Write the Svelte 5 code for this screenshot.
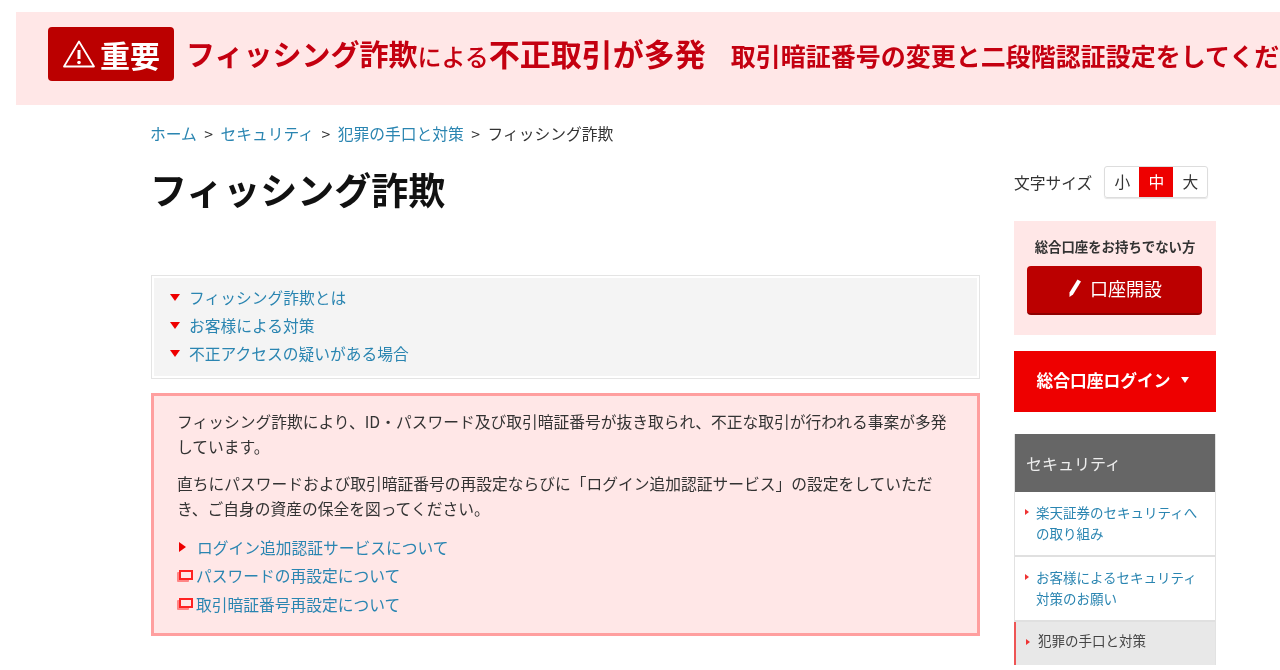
<script>
	const toc = ["フィッシング詐欺とは", "お客様による対策", "不正アクセスの疑いがある場合"];
	const crumbs = ["ホーム", "セキュリティ", "犯罪の手口と対策"];
	const sizes = ["小", "中", "大"];
	const nav = [
		{ text: "楽天証券のセキュリティへの取り組み" },
		{ text: "お客様によるセキュリティ対策のお願い" },
		{ text: "犯罪の手口と対策", active: true }
	];
	const windowLinks = ["パスワードの再設定について", "取引暗証番号再設定について"];
</script>

<div class="page">
	<div class="banner">
		<div class="badge">
			<svg width="34" height="30" viewBox="0 0 34 30" fill="none">
				<path d="M17 2.5 L32 27.5 H2 Z" stroke="#fff" stroke-width="1.8" stroke-linejoin="round" />
				<path d="M17 11 V20" stroke="#fff" stroke-width="3" />
				<circle cx="17" cy="23.5" r="1.8" fill="#fff" />
			</svg>
			<span>重要</span>
		</div>
		<p class="headline">
			<b>フィッシング詐欺</b><small>による</small><b class="wide">不正取引が多発</b>
		</p>
		<p class="subline">取引暗証番号の変更と二段階認証設定をしてください</p>
	</div>

	<div class="layout">
		<main>
			<nav class="crumbs">
				{#each crumbs as crumb}
					<a href="#top">{crumb}</a><span class="sep">&gt;</span>
				{/each}
				<span>フィッシング詐欺</span>
			</nav>
			<h1>フィッシング詐欺</h1>

			<ul class="toc">
				{#each toc as item}
					<li><i class="down"></i><a href="#top">{item}</a></li>
				{/each}
			</ul>

			<section class="alert">
				<p>フィッシング詐欺により、ID・パスワード及び取引暗証番号が抜き取られ、不正な取引が行われる事案が多発しています。</p>
				<p>直ちにパスワードおよび取引暗証番号の再設定ならびに「ログイン追加認証サービス」の設定をしていただき、ご自身の資産の保全を図ってください。</p>
				<ul class="links">
					<li><i class="right"></i><a href="#top">ログイン追加認証サービスについて</a></li>
					{#each windowLinks as link}
						<li>
							<svg class="win" width="16" height="12" viewBox="0 0 16 12">
								<rect x="0" y="2" width="12" height="10" rx="1" fill="#ff8585" />
								<rect x="3" y="1" width="12" height="8" fill="#ffe7e7" stroke="#f22" stroke-width="2" />
							</svg>
							<a href="#top">{link}</a>
						</li>
					{/each}
				</ul>
			</section>
		</main>

		<aside>
			<div class="sizes">
				<span>文字サイズ</span>
				<div class="switch">
					{#each sizes as size}
						<span class:on={size === "中"}>{size}</span>
					{/each}
				</div>
			</div>

			<div class="open">
				<p>総合口座をお持ちでない方</p>
				<div class="open-btn">
					<svg width="14" height="20" viewBox="0 0 14 20">
						<path d="M9.5 1.5 L13 3.5 L5 16.5 L1.5 19 L1.5 14.5 Z" fill="#fff" />
					</svg>
					<span>口座開設</span>
				</div>
			</div>

			<div class="login">総合口座ログイン<i></i></div>

			<div class="side">
				<h2>セキュリティ</h2>
				{#each nav as item}
					<div class="side-item" class:active={item.active}>
						<i></i><a href="#top">{item.text}</a>
					</div>
				{/each}
			</div>
		</aside>
	</div>
</div>

<style>
	:global(body) {
		margin: 0;
		overflow: hidden;
		background: #fff;
	}

	.page {
		width: 1280px;
		height: 670px;
		padding-top: 12px;
		box-sizing: border-box;
		overflow: hidden;
		font-family: "Noto Sans CJK JP", "Noto Sans", sans-serif;
		font-size: 15.75px;
		color: #333;
		/* the reference is a slightly soft, upscaled capture */
		filter: blur(0.45px);
	}

	p,
	h1,
	h2,
	ul {
		margin: 0;
		padding: 0;
		list-style: none;
	}

	a {
		color: #2a85b1;
		text-decoration: none;
	}

	i {
		display: block;
		flex: none;
	}

	.banner {
		margin-left: 16px;
		height: 93px;
		padding: 15px 0 0 32px;
		box-sizing: border-box;
		background: #ffe7e7;
		color: #c40010;
		display: flex;
		align-items: flex-start;
		white-space: nowrap;
	}

	.badge {
		width: 126px;
		height: 54px;
		box-sizing: border-box;
		background: #bb0000;
		border-radius: 4px;
		color: #fff;
		display: flex;
		align-items: center;
		justify-content: center;
		gap: 4px;
		font-size: 30px;
		font-weight: 700;
		flex: none;
		line-height: 1;
	}

	.headline {
		margin: 10px 0 0 12px;
		display: flex;
		align-items: baseline;
		line-height: 1;
	}

	.headline b {
		font-size: 29px;
		font-weight: 700;
	}

	.headline b.wide {
		font-size: 31px;
	}

	.headline small {
		font-size: 24px;
		font-weight: 500;
	}

	.subline {
		margin: 16px 0 0 25px;
		font-size: 25px;
		font-weight: 700;
		line-height: 1;
	}

	.layout {
		display: flex;
		gap: 34px;
		padding-left: 150px;
	}

	main {
		width: 830px;
		flex: none;
	}

	.crumbs {
		margin-top: 17px;
		height: 24px;
		line-height: 24px;
		display: flex;
		gap: 7.5px;
		white-space: nowrap;
	}

	h1 {
		margin-top: 17px;
		font-size: 37px;
		line-height: 52px;
		font-weight: 700;
		color: #111;
	}

	.toc {
		margin: 60px 0 14px 1px;
		height: 104px;
		box-sizing: border-box;
		padding: 7px 0 0 18px;
		border: 1px solid #e4e4e4;
		box-shadow: inset 0 0 0 2px #fff;
		background: #f4f4f4;
	}

	.toc li {
		height: 28px;
		display: flex;
		align-items: center;
		gap: 9px;
	}

	.down {
		width: 0;
		height: 0;
		border: 5.5px solid transparent;
		border-top: 7px solid #ee0000;
		border-bottom: 0;
	}

	.alert {
		margin-left: 1px;
		height: 243px;
		box-sizing: border-box;
		padding: 13px 23px 0;
		border: 3px solid #ff9f9f;
		background: #ffe7e7;
		line-height: 25px;
	}

	.alert p {
		margin-bottom: 12px;
	}

	.links {
		margin-top: 12px;
	}

	.links li {
		height: 28.5px;
		display: flex;
		align-items: center;
	}

	.right {
		width: 0;
		height: 0;
		margin: 0 11px 0 2px;
		border: 5px solid transparent;
		border-left: 7px solid #ee0000;
		border-right: 0;
	}

	.win {
		flex: none;
		margin-right: 3px;
	}

	aside {
		width: 202px;
		flex: none;
		padding-top: 61px;
	}

	.sizes {
		height: 32px;
		display: flex;
		align-items: center;
		gap: 12px;
		white-space: nowrap;
	}

	.switch {
		display: flex;
		height: 32px;
		box-sizing: border-box;
		border: 1px solid #ddd;
		border-radius: 3px;
		box-shadow: 0 1px 1px rgba(0, 0, 0, 0.1);
	}

	.switch span {
		width: 34px;
		padding-bottom: 2px;
		box-sizing: border-box;
		display: flex;
		align-items: center;
		justify-content: center;
	}

	.switch .on {
		background: #ee0000;
		color: #fff;
	}

	.open {
		margin-top: 23px;
		height: 114px;
		box-sizing: border-box;
		padding-top: 16px;
		background: #ffe7e7;
		text-align: center;
	}

	.open p {
		font-size: 13.4px;
		font-weight: 700;
		line-height: 18px;
	}

	.open-btn {
		margin: 11px 14px 0 13px;
		height: 49px;
		padding: 0 0 3px 1px;
		border-radius: 4px;
		background: #bb0000;
		border-bottom: 2px solid #8e0000;
		box-sizing: border-box;
		color: #fff;
		display: flex;
		align-items: center;
		justify-content: center;
		gap: 8px;
		font-size: 18px;
	}

	.login {
		margin-top: 16px;
		height: 61px;
		padding: 0 5px 3px 0;
		box-sizing: border-box;
		background: #ee0000;
		color: #fff;
		font-size: 16.75px;
		font-weight: 700;
		display: flex;
		align-items: center;
		justify-content: center;
		gap: 10px;
	}

	.login i {
		width: 0;
		height: 0;
		border: 4px solid transparent;
		border-top: 6px solid #fff;
		border-bottom: 0;
	}

	.side {
		margin-top: 22px;
		border: 1px solid #e2e2e2;
		border-width: 0 1px;
	}

	h2 {
		height: 58px;
		padding-left: 11px;
		background: #666;
		color: #eee;
		font-size: 16px;
		font-weight: 400;
		line-height: 58px;
	}

	.side-item {
		height: 65px;
		box-sizing: border-box;
		padding: 10px 10px 0 21px;
		border-bottom: 2px solid #e0e0e0;
		font-size: 13.5px;
		line-height: 21px;
		position: relative;
	}

	.side-item i {
		position: absolute;
		left: 10px;
		top: 17px;
		width: 0;
		height: 0;
		border: 3px solid transparent;
		border-left: 4px solid #e33;
		border-right: 0;
	}

	.side-item.active {
		height: 43px;
		border-bottom: 0;
		border-left: 2px solid #ee5555;
		margin-left: -1px;
		background: #e8e8e8;
		padding-top: 8px;
		padding-left: 22px;
	}

	.side-item.active a {
		color: #444;
	}
</style>
